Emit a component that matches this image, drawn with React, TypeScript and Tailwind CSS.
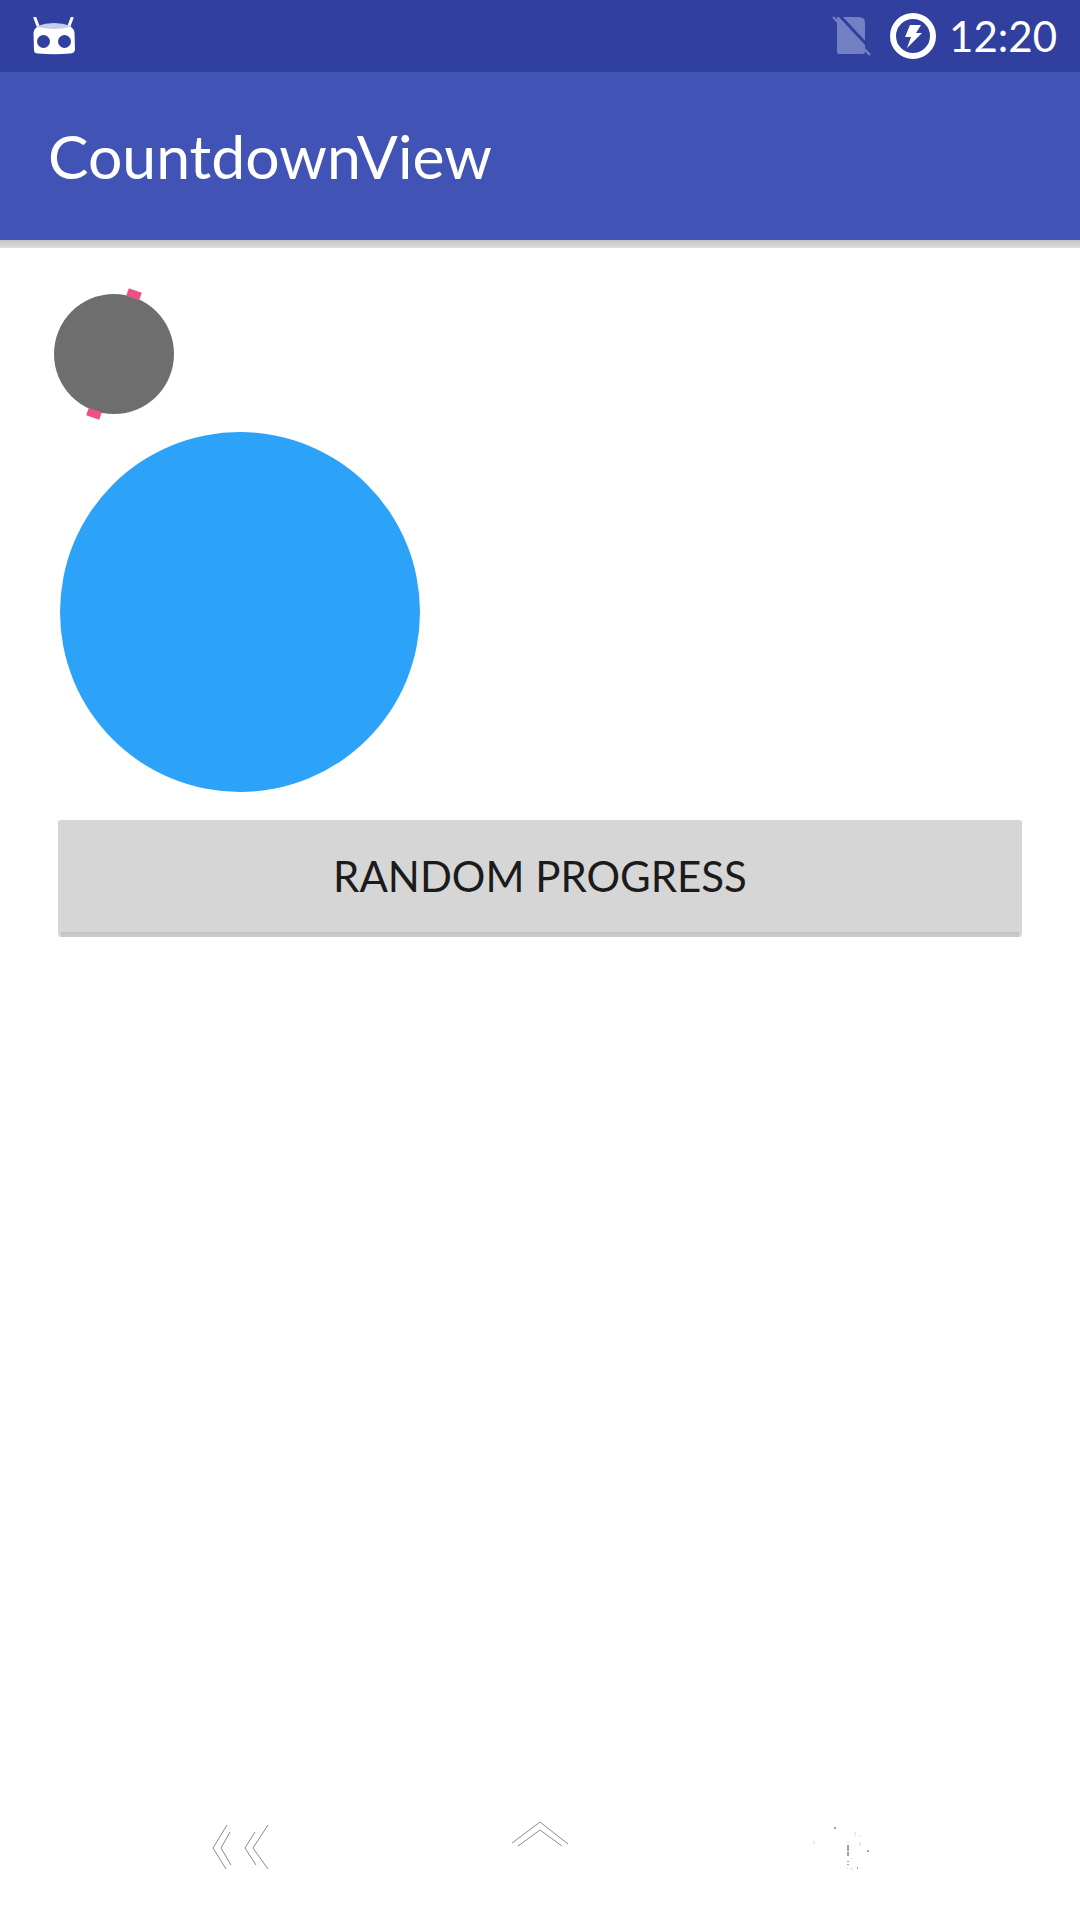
export default function App() {
  return (
    <div className="w-[1080px] h-[1920px] bg-white flex flex-col overflow-hidden font-['Lato',sans-serif]">
      <div className="h-[72px] bg-[#31409f] flex items-center justify-between pl-[32px] pr-[23px] shrink-0">
        <svg width="44" height="38" viewBox="0 0 44 38" className="mt-[-1px]">
          <path d="M3 1 L6 9 M40 1 L37 9" stroke="#fff" strokeWidth="3" strokeLinecap="round" />
          <path d="M5 9 Q22 3 39 9 L40 13 L4 13 Z" fill="#c5cdec" />
          <path d="M1.5 16 Q2 11 6 10 Q22 14 38 10 Q42 11 42.5 16 L43 33 Q42 36.5 38 36.5 Q22 38 6 36.5 Q2 36.5 2 33 Z" fill="#fff" />
          <circle cx="11.5" cy="24.5" r="6.5" fill="#31409f" />
          <circle cx="32.5" cy="24.5" r="6.5" fill="#31409f" />
        </svg>
        <div className="flex items-center">
          <svg width="40" height="44" viewBox="0 0 40 44" className="mr-[18px]">
            <path d="M5 3 H27 Q33 3 33 9 V38 Q33 40 31 40 H7 Q5 40 5 38 Z" fill="#7380c4" />
            <path d="M8 2 L36 32" stroke="#31409f" strokeWidth="3" />
            <path d="M1 3 L38 41" stroke="#7380c4" strokeWidth="2.5" />
          </svg>
          <svg width="46" height="46" viewBox="0 0 46 46" className="mr-[13px]">
            <circle cx="23" cy="23" r="20" fill="none" stroke="#fff" strokeWidth="6" />
            <path d="M20 12 H31 L26 20 H32 L17 35 L21 24 H15 Z" fill="#fff" />
          </svg>
          <span className="text-white text-[42px] leading-none">12:20</span>
        </div>
      </div>

      <div className="h-[168px] bg-[#4153b5] flex items-center pl-[48px] shrink-0">
        <span className="text-white text-[60.7px] leading-none">CountdownView</span>
      </div>
      <div className="h-[8px] bg-gradient-to-b from-[#c4c4c4] to-[#dcdcdc] shrink-0" />

      {/* small countdown, the two ticks poke out of the disc */}
      <svg width="132" height="132" viewBox="0 0 132 132" className="ml-[48px] mt-[40px] shrink-0">
        <circle cx="66" cy="66" r="60" fill="#6e6e6e" />
        <path d="M79.5 4 L92.5 8.5" stroke="#f04f87" strokeWidth="8" />
        <path d="M39.5 123.5 L52.5 128" stroke="#f04f87" strokeWidth="8" />
      </svg>

      <div className="w-[360px] h-[360px] rounded-full bg-[#2ca2f8] ml-[60px] mt-[12px] shrink-0" />

      <div className="ml-[58px] mt-[28px] w-[964px] h-[117px] bg-[#d6d6d6] rounded-[3px] flex flex-col shrink-0">
        <div className="h-[112px] flex items-center justify-center text-[#1b1b1b] text-[42px]">RANDOM PROGRESS</div>
        <div className="h-[5px] mx-[3px] bg-gradient-to-b from-[#c2c2c2] to-[#cccccc]" />
      </div>

      <div className="flex-1" />

      <div className="h-[100px] flex items-start pt-[2px] shrink-0">
        <svg width="60" height="50" viewBox="0 0 60 50" className="ml-[210px]" fill="none" stroke="#8a8a8a" strokeWidth="1">
          <path d="M17 3 L3 26 L16 47" />
          <path d="M20 10 L11 26 L21 43" />
          <path d="M45 10 L35 26 L46 43" />
          <path d="M58 3 L43 26 L58 47" />
        </svg>
        <svg width="60" height="30" viewBox="0 0 60 30" className="ml-[240px] mt-[-2px]" fill="none" stroke="#8a8a8a" strokeWidth="1">
          <path d="M2 23 L30 2 L58 24" />
          <path d="M8 26 L30 10 L52 26" />
        </svg>
        <svg width="60" height="50" viewBox="0 0 60 50" className="ml-[243px]" fill="none">
          <path d="M21 6 h2 M54 29 h2 M35 23 v6 M35 30 v4 M35 39 v1 M35 42 v1 M44 46 h1" stroke="#444" strokeWidth="1" />
          <path d="M1 19 v3 M35 19 v2 M42 10 v4 M47 13 v2 M47 20 v4 M39 36 v1 M34 45 v2 M37 47 h3" stroke="#d8d8d8" strokeWidth="1" />
        </svg>
      </div>
    </div>
  );
}
